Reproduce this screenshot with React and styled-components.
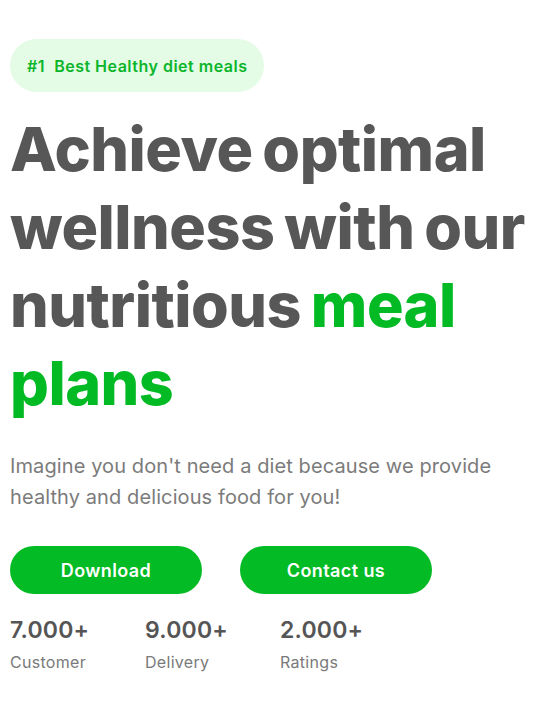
import React from "react";
import styled, { createGlobalStyle } from "styled-components";

const Global = createGlobalStyle`
  html, body { margin: 0; padding: 0; background: #fff; }
  body { font-family: "Inter", "Noto Sans", sans-serif; }
`;

const Hero = styled.section`
  display: flex;
  flex-direction: column;
  align-items: flex-start;
  padding: 39px 0 0 10px;
`;

const Badge = styled.div`
  display: inline-flex;
  align-items: center;
  height: 53px;
  padding: 0 17px;
  border-radius: 27px;
  background: #e4fce6;
  color: #0bb52a;
  font-size: 16px;
  font-weight: 600;
  letter-spacing: 0.5px;
`;

const Title = styled.h1`
  margin: 18px 0 0;
  font-size: 61px;
  line-height: 78px;
  font-weight: 800;
  letter-spacing: -0.5px;
  word-spacing: -3px;
  color: #575757;
  white-space: nowrap;
`;

const Accent = styled.span`
  color: #02ba24;
`;

const Lead = styled.p`
  margin: 29px 0 0;
  font-size: 20px;
  line-height: 31px;
  color: #7b7b7b;
  font-weight: 400;
  letter-spacing: 0.1px;
`;

const Actions = styled.div`
  display: flex;
  gap: 38px;
  margin-top: 33px;
`;

const Button = styled.button`
  width: 192px;
  height: 48px;
  border: none;
  border-radius: 24px;
  background: #03bb24;
  color: #fff;
  font-family: inherit;
  font-size: 18px;
  font-weight: 600;
  letter-spacing: 0.4px;
  cursor: pointer;
`;

const Stats = styled.div`
  display: grid;
  grid-template-columns: repeat(3, 135px);
  margin-top: 21px;
`;

const Stat = styled.div`
  display: flex;
  flex-direction: column;
  gap: 6px;
`;

const Value = styled.span`
  font-size: 23px;
  line-height: 30px;
  font-weight: 600;
  color: #555;
  letter-spacing: 0.2px;
`;

const Label = styled.span`
  font-size: 16px;
  line-height: 22px;
  color: #7a7a7a;
  letter-spacing: 0.3px;
`;

const stats = [
  { v: "7.000+", l: "Customer" },
  { v: "9.000+", l: "Delivery" },
  { v: "2.000+", l: "Ratings" },
];

export default function App() {
  return (
    <>
      <Global />
      <Hero>
        <Badge>#1&nbsp; Best Healthy diet meals</Badge>
        <Title>
          Achieve optimal
          <br />
          wellness with our
          <br />
          nutritious <Accent>meal</Accent>
          <br />
          <Accent>plans</Accent>
        </Title>
        <Lead>
          Imagine you don't need a diet because we provide
          <br />
          healthy and delicious food for you!
        </Lead>
        <Actions>
          <Button>Download</Button>
          <Button>Contact us</Button>
        </Actions>
        <Stats>
          {stats.map((s) => (
            <Stat key={s.l}>
              <Value>{s.v}</Value>
              <Label>{s.l}</Label>
            </Stat>
          ))}
        </Stats>
      </Hero>
    </>
  );
}
